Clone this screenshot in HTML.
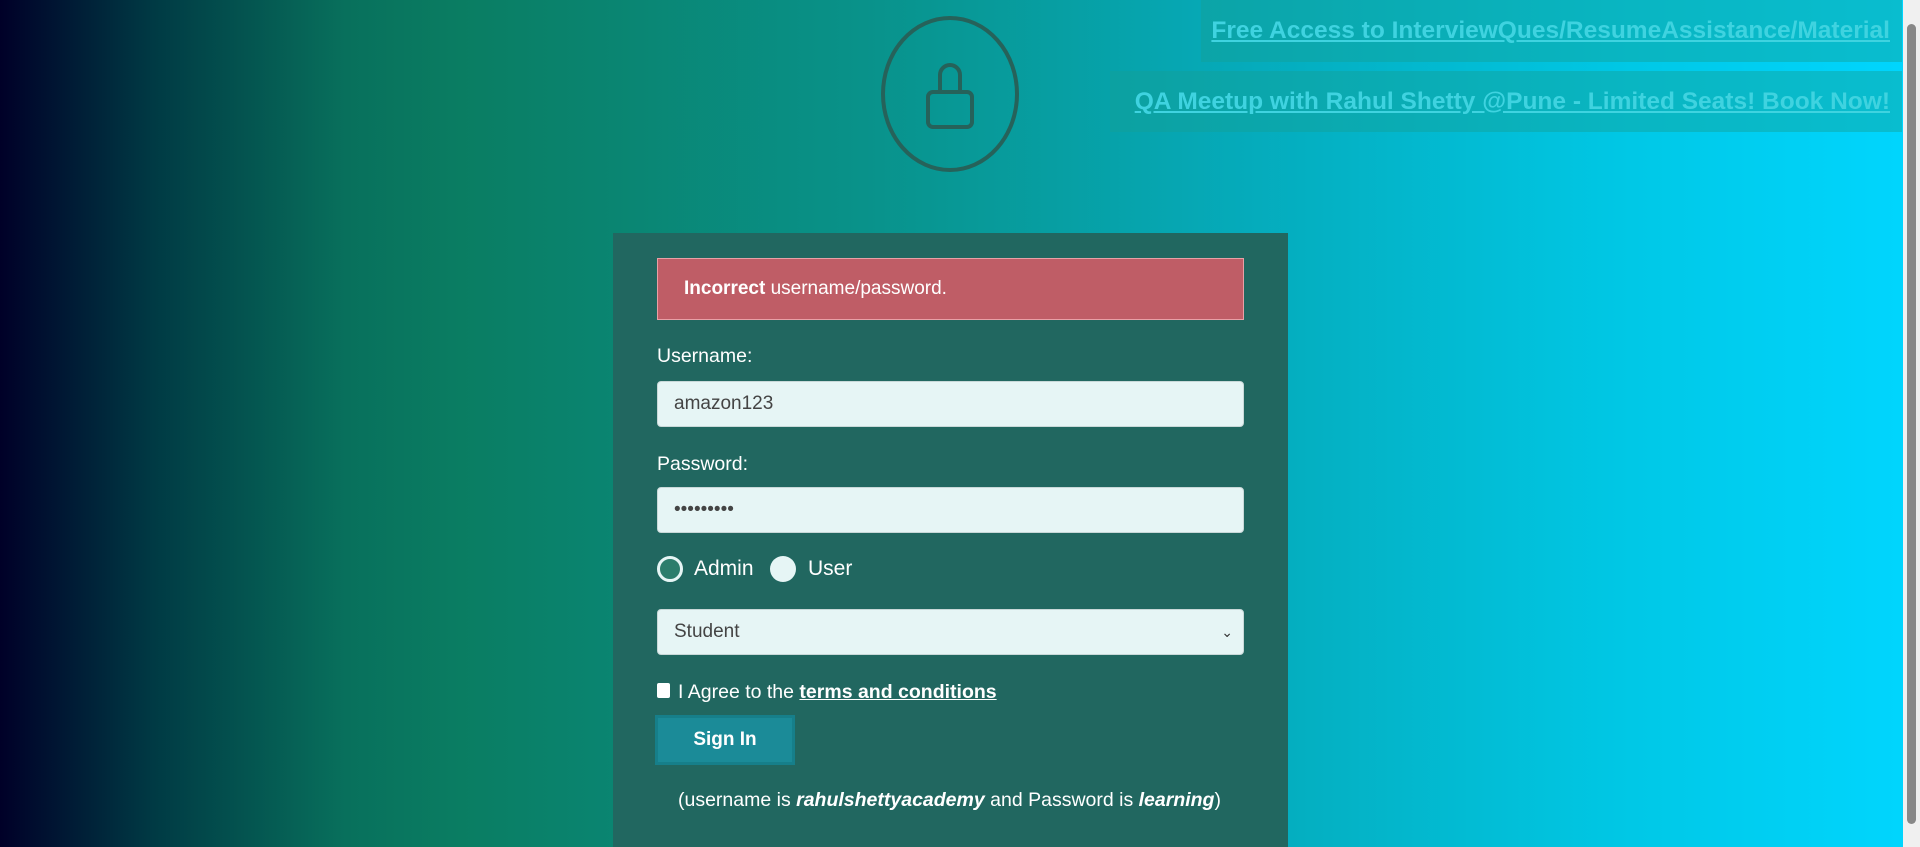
<!DOCTYPE html>
<html><head><meta charset="utf-8"><style>
*{box-sizing:border-box;margin:0;padding:0}
html,body{width:1920px;height:847px;overflow:hidden}
body{font-family:"Liberation Sans",sans-serif;background:linear-gradient(to right,#000028 0%,#003a44 8%,#08705c 18%,#0a7d62 24%,#09928a 45%,#05abbb 65%,#00c8e6 85%,#00d6ff 100%);position:relative;color:#fff}
.sb{position:absolute;right:0;top:0;width:17px;height:847px;background:#f0f0f0}
.sb .th{position:absolute;left:4px;top:24px;width:9px;height:800px;background:#888;border-radius:5px}
.lk{position:absolute;right:18px;background:rgba(20,160,150,.45);font-weight:bold;font-size:24.5px;color:#3fd3e0;text-decoration:underline;padding:0 12px;display:flex;align-items:center;justify-content:flex-end;white-space:nowrap}
.card{position:absolute;left:613px;top:233px;width:675px;height:614px;background:#216760}
.alert{position:absolute;left:44px;top:25px;width:587px;height:62px;background:#bf5d66;border:1px solid #e8a0a6;font-size:19px;padding:0 0 0 26px;line-height:60px}
.lbl{position:absolute;left:44px;font-size:19.5px}
.inp{position:absolute;left:44px;width:587px;height:46px;background:#e6f5f5;border:1px solid #c8d8d8;border-radius:4px;color:#444;font-size:19px;padding-left:16px;line-height:44px}
.rad{position:absolute;top:323px;width:26px;height:26px;border-radius:50%}
.btn{position:absolute;left:42px;top:482px;width:140px;height:50px;background:#1b8b98;border:3px solid #167f8a;font-weight:bold;font-size:19px;text-align:center;line-height:44px}
</style></head><body>
<svg style="position:absolute;left:880px;top:16px" width="140" height="158"><ellipse cx="70" cy="78" rx="67" ry="76" fill="none" stroke="#26625a" stroke-width="4"/><path d="M60 76 V59 a10 10 0 0 1 20 0 V76" fill="none" stroke="#26625a" stroke-width="4"/><rect x="48" y="76" width="44" height="35" rx="5" fill="none" stroke="#26625a" stroke-width="4"/></svg>
<div class="lk" style="top:0;left:1201px;height:62px">Free Access to InterviewQues/ResumeAssistance/Material</div>
<div class="lk" style="top:71px;left:1110px;height:61px">QA Meetup with Rahul Shetty @Pune - Limited Seats! Book Now!</div>
<div class="card">
<div class="alert"><b>Incorrect</b> username/password.</div>
<div class="lbl" style="top:112px">Username:</div>
<div class="inp" style="top:148px">amazon123</div>
<div class="lbl" style="top:220px">Password:</div>
<div class="inp" style="top:254px">•••••••••</div>
<div class="rad" style="left:44px;border:3px solid #e6f5f5;background:#2c7d6c"></div>
<div class="lbl" style="top:324px;left:81px;font-size:21px">Admin</div>
<div class="rad" style="left:157px;background:#e6f5f5"></div>
<div class="lbl" style="top:324px;left:195px;font-size:21px">User</div>
<div class="inp" style="top:376px">Student<span style="position:absolute;right:10px;top:0;font-size:14px;color:#333">&#8964;</span></div>
<div style="position:absolute;left:44px;top:450px;width:13px;height:15px;background:#fff;border-radius:2px"></div>
<div class="lbl" style="top:448px;left:65px">I Agree to the <b style="text-decoration:underline">terms and conditions</b></div>
<div class="btn">Sign In</div>
<div class="lbl" style="top:556px;left:65px">(username is <b><i>rahulshettyacademy</i></b> and Password is <b><i>learning</i></b>)</div>
</div>
<div class="sb"><div class="th"></div></div>
</body></html>
